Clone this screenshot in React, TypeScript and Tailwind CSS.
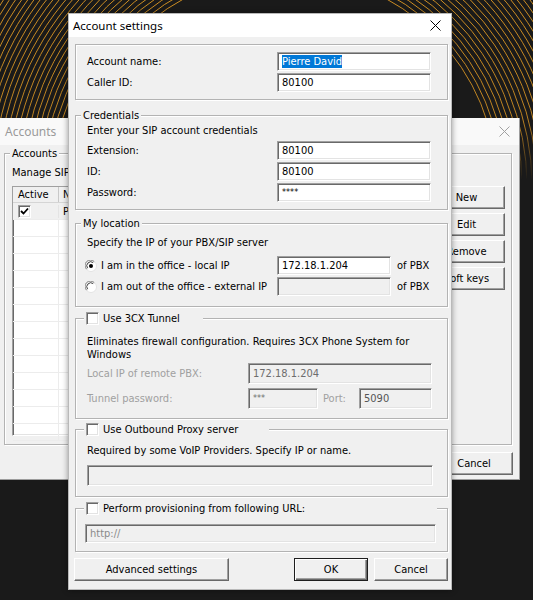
import type { ReactNode } from "react";

const ui =
  "font-['DejaVu_Sans_Condensed','DejaVu_Sans','Liberation_Sans',sans-serif] text-[11px] leading-[13px] text-black";

const sunken =
  "border border-t-[#a0a0a0] border-l-[#a0a0a0] border-r-white border-b-white shadow-[inset_1px_1px_0_#696969,inset_-1px_-1px_0_#e3e3e3]";

function Edit({ className, children, disabled }: { className: string; children?: ReactNode; disabled?: boolean }) {
  return (
    <div
      className={`flex shrink-0 items-center px-[4px] ${sunken} ${disabled ? "bg-[#f0f0f0] text-[#6d6d6d]" : "bg-white"} ${className}`}
    >
      {children}
    </div>
  );
}

function Btn({ className, children, isDefault }: { className: string; children: ReactNode; isDefault?: boolean }) {
  return (
    <button
      className={`flex shrink-0 items-center justify-center bg-[#f0f0f0] ${
        isDefault
          ? "border border-[#1e1e1e] shadow-[inset_1px_1px_0_#fff,inset_-1px_-1px_0_#696969,inset_-2px_-2px_0_#a0a0a0]"
          : "border border-t-white border-l-white border-r-[#696969] border-b-[#696969] shadow-[inset_-1px_-1px_0_#a0a0a0]"
      } ${className}`}
    >
      {children}
    </button>
  );
}

function Check({ checked }: { checked?: boolean }) {
  return (
    <span className={`flex h-[13px] w-[13px] shrink-0 items-center justify-center bg-white ${sunken}`}>
      {checked ? (
        <svg width="9" height="9" viewBox="0 0 9 9">
          <path d="M1 4 L3.5 6.5 L8 1.5" fill="none" stroke="#000" strokeWidth="1.8" />
        </svg>
      ) : null}
    </span>
  );
}

function Radio({ on }: { on?: boolean }) {
  return (
    <svg width="12" height="12" viewBox="0 0 12 12" className="shrink-0">
      <circle cx="6" cy="6" r="5.5" fill="#fff" stroke="#e3e3e3" />
      <path d="M1.6 9.2 A5.2 5.2 0 0 1 9.2 1.6" fill="none" stroke="#808080" strokeWidth="1" />
      <path d="M2.6 8.2 A4 4 0 0 1 8.2 2.6" fill="none" stroke="#404040" strokeWidth="1" />
      {on ? <circle cx="6" cy="6" r="2" fill="#000" /> : null}
    </svg>
  );
}

function Group({
  legend,
  className,
  legendClass = "",
  children,
}: {
  legend: ReactNode;
  className: string;
  legendClass?: string;
  children: ReactNode;
}) {
  return (
    <fieldset className={`shrink-0 border border-[#b3b3b3] shadow-[inset_1px_1px_0_#fff,1px_1px_0_#fff] ${className}`}>
      <legend className={`ml-[5px] flex h-[13px] items-center bg-[#f0f0f0] px-[2px] leading-[13px] ${legendClass}`}>
        {legend}
      </legend>
      {children}
    </fieldset>
  );
}

// wallpaper: thin orange rings, fading out below the top band
function Background() {
  const rings = Array.from({ length: 26 }, (_, i) => 212 + i * 5);
  return (
    <svg className="absolute inset-0" width="533" height="600" viewBox="0 0 533 600">
      <defs>
        <linearGradient id="fade" x1="0" y1="0" x2="0" y2="1">
          <stop offset="0" stopColor="#fff" stopOpacity="1" />
          <stop offset="0.2" stopColor="#fff" stopOpacity="0.9" />
          <stop offset="0.3" stopColor="#fff" stopOpacity="0" />
        </linearGradient>
        <mask id="m">
          <rect width="533" height="600" fill="url(#fade)" />
        </mask>
      </defs>
      <g mask="url(#m)" fill="none" stroke="#e09a25" strokeOpacity="0.9" strokeWidth="1">
        {rings.map((r) => (
          <circle key={r} cx="285" cy="185" r={r} />
        ))}
      </g>
    </svg>
  );
}

// the Accounts window sits behind the dialog; its texts are clipped where the dialog covers them
function AccountsWindow() {
  const rows = Array.from({ length: 13 }, (_, i) => i);
  return (
    <div className="absolute left-0 top-[118px] flex h-[362px] w-[520px] flex-col border-r border-b border-[#9c9c9c] bg-[#f0f0f0]">
      <div className="flex h-[27px] shrink-0 items-center justify-between bg-[#f9f9f9] pl-[5px] pr-[9px] font-['Noto_Sans',sans-serif] text-[12px] text-[#9a9a9a]">
        <span>Accounts</span>
        <svg width="11" height="11" viewBox="0 0 11 11">
          <path d="M0.5 0.5 L10.5 10.5 M10.5 0.5 L0.5 10.5" stroke="#a0a0a0" strokeWidth="1" />
        </svg>
      </div>
      <Group legend="Accounts" className="ml-[4px] mr-[7px] mt-[2px] h-[298px]" legendClass="ml-[5px]">
        <div className="flex h-full flex-col pl-[7px] pr-[6px]">
          <div className="mt-[6px] w-[56px] overflow-hidden whitespace-nowrap">Manage SIP accounts</div>
          <div className="mt-[7px] flex gap-[8px]">
            <div className={`flex h-[250px] flex-1 flex-col bg-white ${sunken}`}>
              <div className="flex h-[16px] shrink-0 border-b border-[#d5d5d5] bg-[#f0f0f0]">
                <div className="w-[46px] border-r border-[#c8c8c8] pl-[5px] leading-[16px]">Active</div>
                <div className="w-[10px] overflow-hidden whitespace-nowrap pl-[4px] leading-[16px]">Name</div>
              </div>
              <div className="flex h-[17px] shrink-0 items-center border-b border-[#ececec] bg-[#f0f0f0]">
                <div className="flex w-[46px] items-center border-r border-[#e4e4e4] pl-[5px]">
                  <Check checked />
                </div>
                <div className="w-[10px] overflow-hidden whitespace-nowrap pl-[4px]">Pierre David</div>
              </div>
              {rows.map((r) => (
                <div key={r} className="flex h-[17px] shrink-0 border-b border-[#ececec]">
                  <div className="w-[46px] border-r border-[#ececec]" />
                </div>
              ))}
            </div>
            <div className="flex w-[77px] flex-col gap-[4px]">
              <Btn className="h-[23px] w-[77px]">New</Btn>
              <Btn className="h-[23px] w-[77px]">Edit</Btn>
              <Btn className="h-[23px] w-[77px]">Remove</Btn>
              <Btn className="h-[23px] w-[77px]">Soft keys</Btn>
            </div>
          </div>
        </div>
      </Group>
      <div className="mt-[7px] flex justify-end pr-[6px]">
        <Btn className="h-[23px] w-[78px]">Cancel</Btn>
      </div>
    </div>
  );
}

function SettingsDialog() {
  return (
    <div className="absolute left-[68px] top-[13px] flex h-[577px] w-[384px] flex-col border border-[#b9b9b9] bg-[#f0f0f0] shadow-[0_0_6px_rgba(0,0,0,0.4)]">
      <div className="flex h-[23px] shrink-0 items-center justify-between bg-white pl-[4px] pr-[10px] font-['Noto_Sans',sans-serif] text-[11.5px] text-black">
        <span>Account settings</span>
        <svg width="11" height="11" viewBox="0 0 11 11">
          <path d="M0.5 0.5 L10.5 10.5 M10.5 0.5 L0.5 10.5" stroke="#000" strokeWidth="1" />
        </svg>
      </div>

      <div className="ml-[6px] mr-[3px] mt-[7px] flex h-[56px] shrink-0 flex-col gap-[2px] border border-[#b3b3b3] pl-[11px] pr-[16px] pt-[7px] shadow-[inset_1px_1px_0_#fff,1px_1px_0_#fff]">
        <div className="flex items-center">
          <span className="flex-1">Account name:</span>
          <Edit className="h-[19px] w-[154px]">
            <span className="bg-[#0078d7] text-white">Pierre David</span>
          </Edit>
        </div>
        <div className="flex items-center">
          <span className="flex-1">Caller ID:</span>
          <Edit className="h-[19px] w-[154px]">80100</Edit>
        </div>
      </div>

      <Group legend="Credentials" className="ml-[6px] mr-[3px] mt-[9px] h-[101px]">
        <div className="flex flex-col pl-[11px] pr-[16px] pt-[2px]">
          <div>Enter your SIP account credentials</div>
          <div className="mt-[4px] flex flex-col gap-[2px]">
            <div className="flex items-center">
              <span className="flex-1">Extension:</span>
              <Edit className="h-[19px] w-[154px]">80100</Edit>
            </div>
            <div className="flex items-center">
              <span className="flex-1">ID:</span>
              <Edit className="h-[19px] w-[154px]">80100</Edit>
            </div>
            <div className="flex items-center">
              <span className="flex-1">Password:</span>
              <Edit className="h-[19px] w-[154px] text-[9px]">****</Edit>
            </div>
          </div>
        </div>
      </Group>

      <Group legend="My location" className="ml-[6px] mr-[3px] mt-[7px] h-[90px]">
        <div className="flex flex-col pl-[9px] pr-[16px] pt-[6px]">
          <div className="pl-[2px]">Specify the IP of your PBX/SIP server</div>
          <div className="mt-[7px] flex flex-col gap-[2px]">
            <div className="flex items-center">
              <span className="flex flex-1 items-center gap-[4px]">
                <Radio on />I am in the office - local IP
              </span>
              <Edit className="h-[19px] w-[114px]">172.18.1.204</Edit>
              <span className="w-[40px] pl-[6px]">of PBX</span>
            </div>
            <div className="flex items-center">
              <span className="flex flex-1 items-center gap-[4px]">
                <Radio />I am out of the office - external IP
              </span>
              <Edit className="h-[19px] w-[114px]" disabled />
              <span className="w-[40px] pl-[6px]">of PBX</span>
            </div>
          </div>
        </div>
      </Group>

      <Group
        legend={
          <span className="flex items-center gap-[4px]">
            <Check />
            Use 3CX Tunnel
          </span>
        }
        className="ml-[6px] mr-[3px] mt-[5px] h-[107px]"
        legendClass="ml-[8px] w-[119px] px-0"
      >
        <div className="flex flex-col pl-[11px] pr-[15px] pt-[10px]">
          <div>
            Eliminates firewall configuration. Requires 3CX Phone System for
            <br />
            Windows
          </div>
          <div className="mt-[2px] flex flex-col gap-[4px] text-[#a0a0a0]">
            <div className="flex items-center">
              <span className="flex-1">Local IP of remote PBX:</span>
              <Edit className="h-[21px] w-[184px]" disabled>
                172.18.1.204
              </Edit>
            </div>
            <div className="flex items-center">
              <span className="flex-1">Tunnel password:</span>
              <Edit className="h-[21px] w-[70px] text-[9px]" disabled>
                ***
              </Edit>
              <span className="w-[41px] pl-[5px]">Port:</span>
              <Edit className="h-[21px] w-[73px] text-[#555]" disabled>
                5090
              </Edit>
            </div>
          </div>
        </div>
      </Group>

      <Group
        legend={
          <span className="flex items-center gap-[4px]">
            <Check />
            Use Outbound Proxy server
          </span>
        }
        className="ml-[6px] mr-[3px] mt-[4px] h-[74px]"
        legendClass="ml-[8px] w-[185px] px-0"
      >
        <div className="flex flex-col pl-[11px] pr-[14px] pt-[8px]">
          <div>Required by some VoIP Providers. Specify IP or name.</div>
          <Edit className="mt-[8px] h-[21px] w-full" disabled />
        </div>
      </Group>

      <Group
        legend={
          <span className="flex items-center gap-[4px]">
            <Check />
            Perform provisioning from following URL:
          </span>
        }
        className="ml-[6px] mr-[3px] mt-[5px] h-[50px]"
        legendClass="ml-[8px] w-[353px] px-0"
      >
        <div className="flex flex-col pl-[9px] pr-[11px] pt-[9px]">
          <Edit className="h-[19px] w-full px-[2px] text-[#8a8a8a]" disabled>
            http://
          </Edit>
        </div>
      </Group>

      <div className="ml-[5px] mr-[3px] mt-[6px] flex items-center">
        <Btn className="h-[23px] w-[155px]">Advanced settings</Btn>
        <div className="flex-1" />
        <Btn className="h-[23px] w-[74px]" isDefault>
          OK
        </Btn>
        <Btn className="ml-[6px] h-[23px] w-[74px]">Cancel</Btn>
      </div>
    </div>
  );
}

export default function App() {
  return (
    <div className={`relative h-[600px] w-[533px] overflow-hidden bg-[#1a1a1a] ${ui}`}>
      <Background />
      <AccountsWindow />
      <SettingsDialog />
    </div>
  );
}
